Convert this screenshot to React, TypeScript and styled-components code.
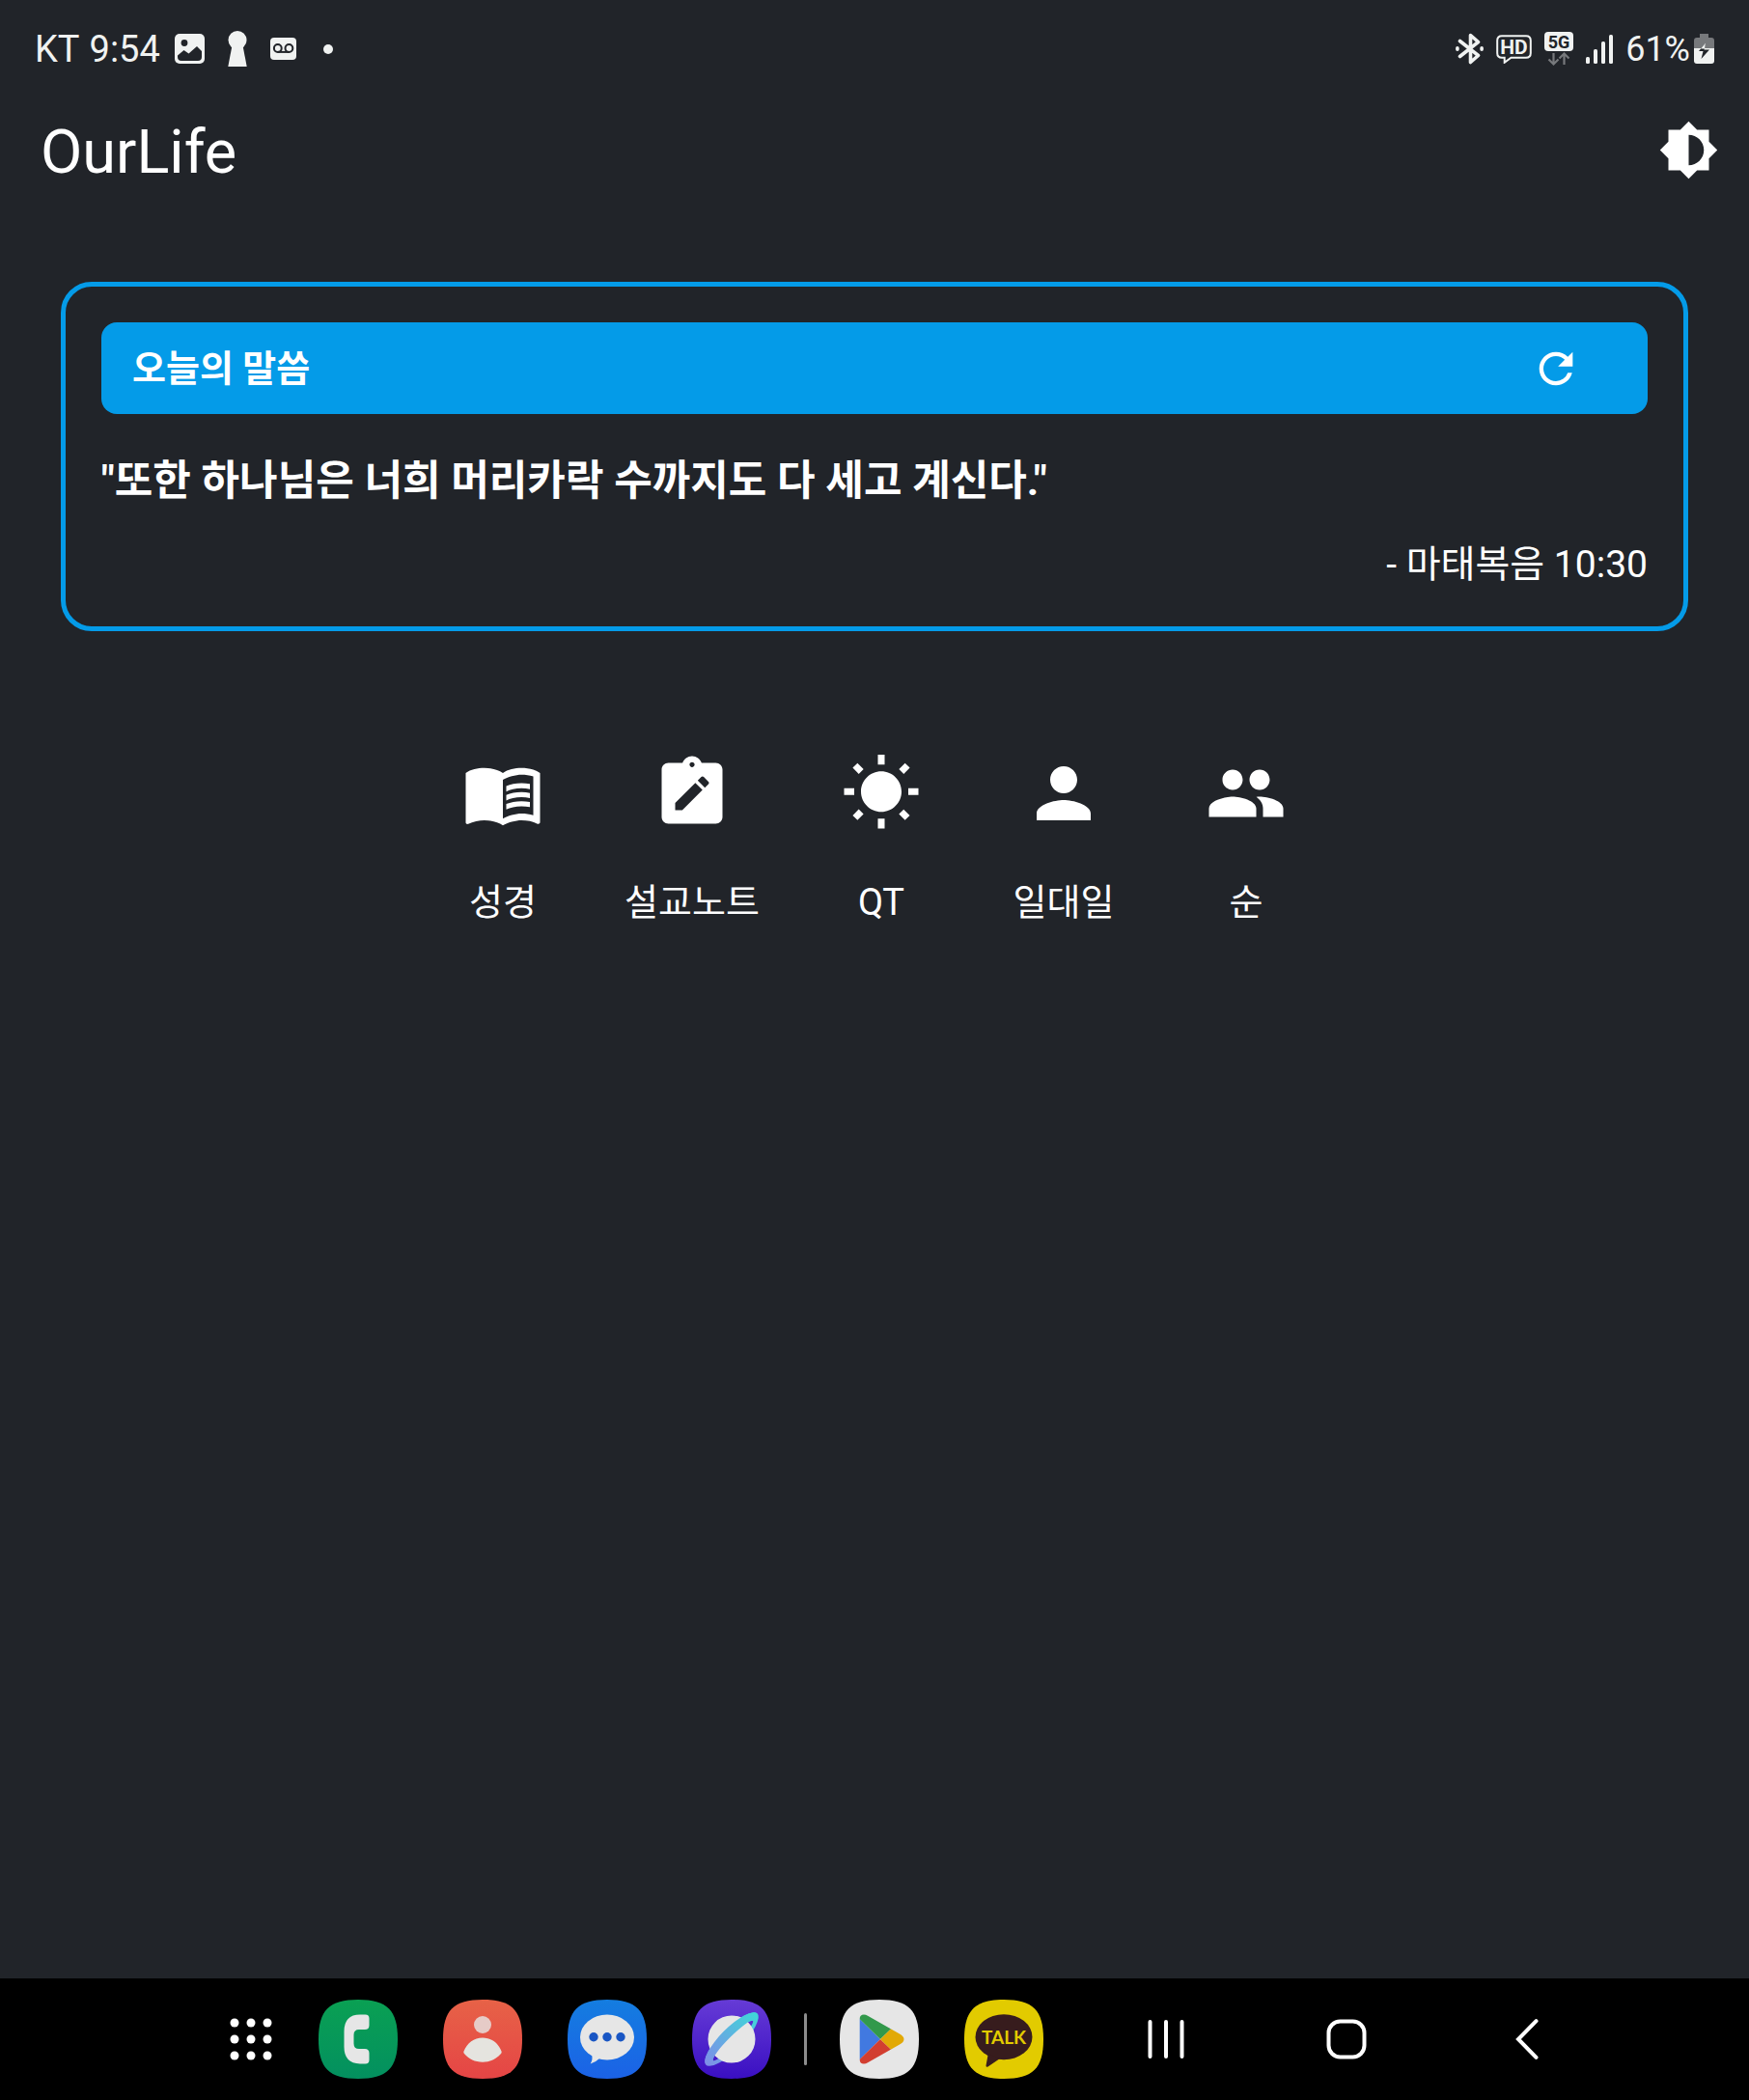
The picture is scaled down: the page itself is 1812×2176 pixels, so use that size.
import React, { useState } from "react";
import styled, { createGlobalStyle } from "styled-components";
import { MdBrightness6, MdMenuBook, MdNoteAlt, MdPeople, MdPerson, MdRefresh, MdWbSunny } from "react-icons/md";

const colors = {
  page: "#212429",
  accent: "#049be8",
  text: "#ffffff",
  status: "#f0f2f1",
  dim: "#77797c",
  nav: "#000000",
};

const GlobalStyle = createGlobalStyle`
  * { box-sizing: border-box; }
  body {
    margin: 0;
    background: ${colors.page};
    color: ${colors.text};
    font-family: Roboto, "Noto Sans CJK KR", sans-serif;
  }
  svg { display: block; flex: none; }
`;

const Screen = styled.div`
  min-height: 100vh;
  display: flex;
  flex-direction: column;
`;

const StatusBar = styled.div`
  height: 101px;
  padding: 0 36px;
  display: flex;
  align-items: center;
  justify-content: space-between;
  color: ${colors.status};
  font-size: 38px;
  line-height: 44px;
`;

const StatusGroup = styled.div<{ $gap: number }>`
  display: flex;
  align-items: center;
  gap: ${(p) => p.$gap}px;
`;

const BatteryLevel = styled.span`
  font-size: 36px;
`;

const AppBar = styled.header`
  height: 108px;
  padding: 0 31px 0 42px;
  display: flex;
  align-items: center;
  justify-content: space-between;
`;

const Title = styled.h1`
  margin: 0;
  padding-top: 6px;
  font-size: 63px;
  line-height: 74px;
  font-weight: 400;
`;

const IconButton = styled.button<{ $width?: number }>`
  width: ${(p) => (p.$width ? `${p.$width}px` : "auto")};
  display: flex;
  align-items: center;
  justify-content: center;
  padding: 0;
  border: 0;
  background: none;
  color: inherit;
  font: inherit;
  cursor: pointer;
`;

const Main = styled.main`
  flex: 1;
  padding: 83px 63px 0;
`;

const VerseCard = styled.section`
  padding: 37px;
  border: 5px solid ${colors.accent};
  border-radius: 32px;
`;

const CardBanner = styled.div`
  height: 95px;
  padding: 0 32px;
  display: flex;
  align-items: center;
  justify-content: space-between;
  border-radius: 16px;
  background: ${colors.accent};
`;

const BannerTitle = styled.h2`
  margin: 0;
  font-size: 38px;
  line-height: 56px;
  font-weight: 700;
`;

const Verse = styled.p`
  margin: 34px 0 25px;
  font-size: 43px;
  line-height: 70px;
  font-weight: 700;
`;

const Source = styled.p`
  margin: 0;
  text-align: right;
  font-size: 39px;
  line-height: 54px;
`;

const Menu = styled.nav`
  margin-top: 105px;
  display: flex;
  flex-wrap: wrap;
  justify-content: center;
  gap: 63px;
`;

const MenuItem = styled.button`
  min-width: 126px;
  padding: 21px 0 0;
  display: flex;
  flex-direction: column;
  align-items: center;
  gap: 41px;
  border: 0;
  background: none;
  color: inherit;
  font: inherit;
  font-size: 38px;
  line-height: 60px;
  cursor: pointer;
`;

const NavBar = styled.footer`
  height: 126px;
  padding: 0 137px;
  display: flex;
  align-items: center;
  justify-content: space-between;
  background: ${colors.nav};
`;

const Dock = styled.div`
  padding-left: 100px;
  display: flex;
  align-items: center;
  gap: 34px;
`;

const DockGroup = styled.div`
  display: flex;
  align-items: center;
  gap: 47px;
`;

const DockDivider = styled.span`
  width: 3px;
  height: 54px;
  border-radius: 2px;
  background: #8c8c8c;
`;

const SoftKeys = styled.div`
  display: flex;
  align-items: center;
`;

const SQUIRCLE = "M41 0C71 0 82 11 82 41S71 82 41 82 0 71 0 41 11 0 41 0Z";

function PictureIcon() {
  return (
    <svg width="31" height="31" viewBox="0 0 31 31" aria-hidden="true">
      <rect width="31" height="31" rx="5" fill={colors.status} />
      <circle cx="10" cy="9.500" r="3.400" fill={colors.page} />
      <path d="M3 22.500L9.500 17l5 3.500L23 13l5 5v6q0 4-4 4H7q-4 0-4-4Z" fill={colors.page} />
    </svg>
  );
}

function KeyholeIcon() {
  return (
    <svg width="20" height="37" viewBox="0 0 20 37" fill={colors.status} aria-hidden="true">
      <circle cx="10" cy="9.500" r="9.500" />
      <path d="M4.500 15h11L19.700 37H.3Z" />
    </svg>
  );
}

function VoicemailIcon() {
  return (
    <svg width="27" height="23" viewBox="0 0 27 23" aria-hidden="true">
      <rect width="27" height="23" rx="4" fill={colors.status} />
      <g fill="none" stroke={colors.page} strokeWidth="2">
        <circle cx="7.800" cy="11" r="3.900" />
        <circle cx="19.400" cy="11" r="3.900" />
        <path d="M7.800 14.900h11.600" />
      </g>
    </svg>
  );
}

function DotIcon() {
  return (
    <svg width="14" height="10" viewBox="0 0 14 10" fill={colors.status} aria-hidden="true">
      <circle cx="9" cy="5" r="5" />
    </svg>
  );
}

function BluetoothIcon() {
  return (
    <svg width="29" height="33" viewBox="0 0 29 33" fill="none" stroke={colors.status} strokeWidth="3.600" strokeLinecap="round" strokeLinejoin="round" aria-hidden="true">
      <path d="M4.500 8.500L23.500 23.500l-8 7V2.500l8 7L4.500 24.500" />
      <path d="M1.900 15.800v1.400M27.100 15.800v1.400" />
    </svg>
  );
}

function HdIcon() {
  return (
    <svg width="37" height="30" viewBox="0 0 37 30" aria-hidden="true">
      <path d="M6 1.200h25q4.800 0 4.800 4.800v13q0 4.800-4.800 4.800H15.500L8.700 28.800V23.800H6Q1.200 23.800 1.200 19V6Q1.200 1.200 6 1.200Z" fill="none" stroke={colors.status} strokeWidth="2" />
      <text x="18.500" y="20" textAnchor="middle" fontFamily="Roboto, sans-serif" fontWeight="700" fontSize="21" fill={colors.status}>HD</text>
    </svg>
  );
}

function FiveGIcon() {
  return (
    <svg width="30" height="35" viewBox="0 0 30 35" overflow="visible" aria-hidden="true">
      <rect width="30" height="20" rx="4" fill={colors.status} />
      <text x="15" y="17" textAnchor="middle" fontFamily="Roboto, sans-serif" fontWeight="700" fontSize="18" fill={colors.page}>5G</text>
      <path d="M9.500 22v11M4.500 28.500l5 5 5-5M20.500 34V23M15.500 27.500l5-5 5 5" fill="none" stroke={colors.dim} strokeWidth="2.200" />
    </svg>
  );
}

function SignalIcon() {
  return (
    <svg width="28" height="30" viewBox="0 0 28 30" fill={colors.status} aria-hidden="true">
      <rect x="0" y="23" width="4" height="7" rx="1.500" />
      <rect x="8" y="15" width="4" height="15" rx="1.500" />
      <rect x="16" y="7" width="4" height="23" rx="1.500" />
      <rect x="24" y="0" width="4" height="30" rx="1.500" />
    </svg>
  );
}

function BatteryIcon() {
  return (
    <svg width="21" height="31" viewBox="0 0 21 31" aria-hidden="true">
      <path d="M6 0h9v4h3q3 0 3 3v8H0V7q0-3 3-3h3Z" fill={colors.dim} />
      <path d="M0 15h21v13q0 3-3 3H3q-3 0-3-3Z" fill={colors.status} />
      <path d="M12 9.500L5 18h4.500L7.500 26 16 16.500h-5.500Z" fill={colors.page} />
      <path d="M12 9.500L7 15.500h4Z" fill={colors.status} />
    </svg>
  );
}

function AppDrawerIcon() {
  const steps = [6, 23, 40];
  return (
    <svg width="46" height="46" viewBox="0 0 46 46" fill="#fff" aria-hidden="true">
      {steps.map((y) => steps.map((x) => <circle key={`${x}-${y}`} cx={x} cy={y} r="4.500" />))}
    </svg>
  );
}

function AppTile({ children }: { children: React.ReactNode }) {
  return (
    <svg width="82" height="82" viewBox="0 0 82 82" aria-hidden="true">
      {children}
    </svg>
  );
}

function Gradient({ id, from, to }: { id: string; from: string; to: string }) {
  return (
    <linearGradient id={id} x1="0" y1="0" x2="0" y2="1">
      <stop offset="0" stopColor={from} />
      <stop offset="1" stopColor={to} />
    </linearGradient>
  );
}

function PhoneApp() {
  return (
    <AppTile>
      <Gradient id="phone" from="#0aa053" to="#03905f" />
      <path d={SQUIRCLE} fill="url(#phone)" />
      <path d="M43 15.500h5.500q4 0 4 4v7q0 4.500-4.500 4.500h-6q-5.500 0-5.500 5.500v9q0 5.500 5.500 5.500h6q4.500 0 4.500 4.500v7q0 4-4 4H43Q26.500 66 26.500 49V33Q26.500 15.500 43 15.500Z" fill="#e6e6e6" />
    </AppTile>
  );
}

function ContactsApp() {
  return (
    <AppTile>
      <Gradient id="contacts" from="#e76247" to="#e54545" />
      <path d={SQUIRCLE} fill="url(#contacts)" />
      <circle cx="41" cy="26" r="9" fill="#e6cbc7" />
      <path d="M21.500 53.500C25 45 32 39.500 41 39.500S57 45 60.500 53.500Q61 55 60 56C55 61.500 49 64.700 41 64.700S27 61.500 22 56Q21 55 21.500 53.500Z" fill="#e5e4df" />
    </AppTile>
  );
}

function MessagesApp() {
  return (
    <AppTile>
      <Gradient id="messages" from="#147de0" to="#1b62e6" />
      <path d={SQUIRCLE} fill="url(#messages)" />
      <ellipse cx="41" cy="39" rx="28" ry="23.500" fill="#e6e6e6" />
      <path d="M25 56Q26.500 62 23.700 66.500Q29 65 33 61L38 56Z" fill="#e6e6e6" />
      {[27, 41, 55].map((x) => (
        <circle key={x} cx={x} cy="38.700" r="4.700" fill="#1956c4" />
      ))}
    </AppTile>
  );
}

function InternetApp() {
  const ring = "M-37.500 0A37.500 11.500 0 0 1 37.500 0A37.500 11.500 0 0 1 -37.500 0ZM-29 2A29 4.500 0 0 0 29 2A29 4.500 0 0 0 -29 2Z";
  return (
    <AppTile>
      <Gradient id="internet" from="#663bd6" to="#3a0fc2" />
      <linearGradient id="ring" x1="0" y1="0" x2="1" y2="0">
        <stop offset="0" stopColor="#7f8de8" />
        <stop offset="1" stopColor="#3ed8d8" />
      </linearGradient>
      <clipPath id="front">
        <rect x="-40" y="-14" width="80" height="16" />
      </clipPath>
      <path d={SQUIRCLE} fill="url(#internet)" />
      <g transform="translate(41 41) rotate(-45)">
        <path d={ring} fill="url(#ring)" fillRule="evenodd" />
        <circle r="24.500" fill="#e6e6e6" />
        <path d={ring} fill="url(#ring)" fillRule="evenodd" clipPath="url(#front)" />
      </g>
    </AppTile>
  );
}

function PlayApp() {
  return (
    <AppTile>
      <clipPath id="triangle">
        <path d="M20.700 20Q20.700 15.500 25 15.500Q27 15.500 29 16.700L62 35.500Q66.500 38 66.500 41T62 46.500L29 65.300Q27 66.500 25 66.500Q20.700 66.500 20.700 62Z" />
      </clipPath>
      <path d={SQUIRCLE} fill="#e6e6e6" />
      <g clipPath="url(#triangle)">
        <path d="M20 19.500L42 41 20 62.500Z" fill="#4179e0" />
        <path d="M20 14h30l6 13.500L42 41 20 19.500Z" fill="#32994b" />
        <path d="M20 68h30l6-13.500L42 41 20 62.500Z" fill="#d23e30" />
        <path d="M42 41L56 27.500 70 30v22l-14 2.500Z" fill="#e2a906" />
      </g>
    </AppTile>
  );
}

function TalkApp() {
  return (
    <AppTile>
      <path d={SQUIRCLE} fill="#e2cb00" />
      <ellipse cx="41" cy="38.700" rx="29.500" ry="23.500" fill="#371c1d" />
      <path d="M24.800 56L22.500 68.500Q22.700 70.500 24.500 69.500L37 61Z" fill="#371c1d" />
      <text x="41" y="45.500" textAnchor="middle" fontFamily="Lato, sans-serif" fontWeight="700" fontSize="19" fill="#e2cb00">TALK</text>
    </AppTile>
  );
}

function RecentsIcon() {
  return (
    <svg width="40" height="42" viewBox="0 0 40 42" stroke="#fff" strokeWidth="4" strokeLinecap="round" aria-hidden="true">
      <path d="M3.500 3v36M20 3v36M36.500 3v36" />
    </svg>
  );
}

function HomeIcon() {
  return (
    <svg width="42" height="42" viewBox="0 0 42 42" fill="none" stroke="#fff" strokeWidth="4" aria-hidden="true">
      <rect x="2.500" y="2.500" width="37" height="37" rx="12" />
    </svg>
  );
}

function BackIcon() {
  return (
    <svg width="24" height="42" viewBox="0 0 24 42" fill="none" stroke="#fff" strokeWidth="4" strokeLinecap="round" aria-hidden="true">
      <path d="M21.500 2.200L3 21l18.500 18.800" />
    </svg>
  );
}

const verses = [{ text: "또한 하나님은 너희 머리카락 수까지도 다 세고 계신다.", source: "마태복음 10:30" }];

const menuItems = [
  { label: "성경", icon: <MdMenuBook size={84} /> },
  { label: "설교노트", icon: <MdNoteAlt size={84} /> },
  { label: "QT", icon: <MdWbSunny size={84} /> },
  { label: "일대일", icon: <MdPerson size={84} /> },
  { label: "순", icon: <MdPeople size={84} /> },
];

const mainApps = [
  { name: "전화", icon: <PhoneApp /> },
  { name: "연락처", icon: <ContactsApp /> },
  { name: "메시지", icon: <MessagesApp /> },
  { name: "인터넷", icon: <InternetApp /> },
];

const recentApps = [
  { name: "Play 스토어", icon: <PlayApp /> },
  { name: "카카오톡", icon: <TalkApp /> },
];

const softKeys = [
  { name: "최근 앱", icon: <RecentsIcon /> },
  { name: "홈", icon: <HomeIcon /> },
  { name: "뒤로", icon: <BackIcon /> },
];

export default function App() {
  const [index, setIndex] = useState(0);
  const verse = verses[index];

  return (
    <Screen>
      <GlobalStyle />
      <StatusBar>
        <StatusGroup $gap={24}>
          <StatusGroup $gap={15}>
            <StatusGroup $gap={10}>
              <span>KT</span>
              <span>9:54</span>
            </StatusGroup>
            <PictureIcon />
          </StatusGroup>
          <KeyholeIcon />
          <VoicemailIcon />
          <DotIcon />
        </StatusGroup>
        <StatusGroup $gap={13}>
          <BluetoothIcon />
          <HdIcon />
          <FiveGIcon />
          <SignalIcon />
          <StatusGroup $gap={4}>
            <BatteryLevel>61%</BatteryLevel>
            <BatteryIcon />
          </StatusGroup>
        </StatusGroup>
      </StatusBar>
      <AppBar>
        <Title>OurLife</Title>
        <IconButton aria-label="화면 테마 변경">
          <MdBrightness6 size={63} />
        </IconButton>
      </AppBar>
      <Main>
        <VerseCard>
          <CardBanner>
            <BannerTitle>오늘의 말씀</BannerTitle>
            <IconButton $width={126} aria-label="새로고침" onClick={() => setIndex((index + 1) % verses.length)}>
              <MdRefresh size={52} />
            </IconButton>
          </CardBanner>
          <Verse>"{verse.text}"</Verse>
          <Source>- {verse.source}</Source>
        </VerseCard>
        <Menu>
          {menuItems.map((item) => (
            <MenuItem key={item.label}>
              {item.icon}
              {item.label}
            </MenuItem>
          ))}
        </Menu>
      </Main>
      <NavBar>
        <Dock>
          <DockGroup>
            <IconButton aria-label="모든 앱">
              <AppDrawerIcon />
            </IconButton>
            {mainApps.map((app) => (
              <IconButton key={app.name} aria-label={app.name}>
                {app.icon}
              </IconButton>
            ))}
          </DockGroup>
          <DockDivider />
          <DockGroup>
            {recentApps.map((app) => (
              <IconButton key={app.name} aria-label={app.name}>
                {app.icon}
              </IconButton>
            ))}
          </DockGroup>
        </Dock>
        <SoftKeys>
          {softKeys.map((key) => (
            <IconButton key={key.name} $width={187} aria-label={key.name}>
              {key.icon}
            </IconButton>
          ))}
        </SoftKeys>
      </NavBar>
    </Screen>
  );
}
